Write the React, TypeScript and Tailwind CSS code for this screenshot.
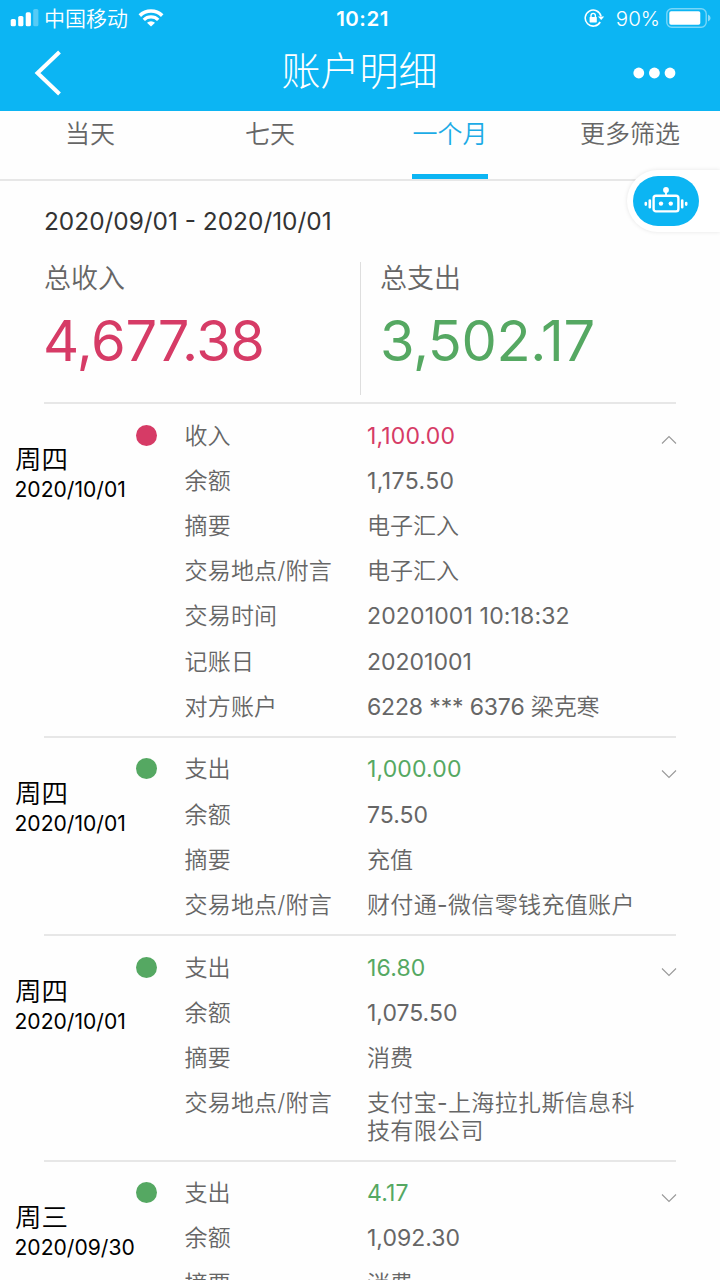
import clsx from "clsx";

type Row = { label: string; value: string; tracking?: string };

type Transaction = {
  day: string;
  date: string;
  type: "income" | "expense";
  amount: string;
  expanded?: boolean;
  rows: Row[];
};

const TABS = ["当天", "七天", "一个月", "更多筛选"];

const TRANSACTIONS: Transaction[] = [
  {
    day: "周四",
    date: "2020/10/01",
    type: "income",
    amount: "1,100.00",
    expanded: true,
    rows: [
      { label: "余额", value: "1,175.50", tracking: "tracking-[0.4px]" },
      { label: "摘要", value: "电子汇入" },
      { label: "交易地点/附言", value: "电子汇入" },
      { label: "交易时间", value: "20201001 10:18:32", tracking: "tracking-[0.15px]" },
      { label: "记账日", value: "20201001" },
      { label: "对方账户", value: "6228 *** 6376 梁克寒", tracking: "tracking-[-0.15px]" },
    ],
  },
  {
    day: "周四",
    date: "2020/10/01",
    type: "expense",
    amount: "1,000.00",
    rows: [
      { label: "余额", value: "75.50" },
      { label: "摘要", value: "充值" },
      { label: "交易地点/附言", value: "财付通-微信零钱充值账户", tracking: "tracking-[0.35px]" },
    ],
  },
  {
    day: "周四",
    date: "2020/10/01",
    type: "expense",
    amount: "16.80",
    rows: [
      { label: "余额", value: "1,075.50" },
      { label: "摘要", value: "消费" },
      { label: "交易地点/附言", value: "支付宝-上海拉扎斯信息科技有限公司", tracking: "tracking-[0.35px]" },
    ],
  },
  {
    day: "周三",
    date: "2020/09/30",
    type: "expense",
    amount: "4.17",
    rows: [
      { label: "余额", value: "1,092.30" },
      { label: "摘要", value: "消费" },
    ],
  },
];

// Digits need a regular weight to sit evenly beside the lighter Chinese glyphs.
function MixedText({ text }: { text: string }) {
  return text.split(/([\x20-\x7e]+)/).map((part, i) =>
    i % 2 ? (
      <span key={i} className="font-normal">
        {part}
      </span>
    ) : (
      part
    ),
  );
}

function StatusBar() {
  return (
    <div className="flex h-9 items-center justify-between pl-[10px] pr-[9px]">
      <div className="flex flex-1 items-center">
        <svg width="29" height="18" viewBox="0 0 29 18" fill="#fff">
          <rect x="0.7" y="10" width="5.2" height="7.3" rx="1.6" />
          <rect x="8.2" y="7" width="5.2" height="10.3" rx="1.6" />
          <rect x="15.7" y="3.3" width="5.2" height="14" rx="1.6" />
          <rect x="23.2" y="0" width="5.2" height="17.3" rx="1.6" opacity="0.3" />
        </svg>
        <span className="ml-[5px] pt-[1px] text-[21px] leading-9">中国移动</span>
        <svg className="ml-[10px]" width="26" height="18" viewBox="0 0 26 18" fill="none" stroke="#fff">
          <path d="M1.8 6.6 A16 16 0 0 1 24.2 6.6" strokeWidth="3.6" />
          <path d="M5.8 10.8 A10.2 10.2 0 0 1 20.2 10.8" strokeWidth="3.3" />
          <path d="M13 17.6 L9 13.8 A5.8 5.8 0 0 1 17 13.8 Z" fill="#fff" stroke="none" />
        </svg>
      </div>
      <span className="pl-1 pt-[1px] text-[20.5px] font-semibold leading-9 tracking-[0.5px]">10:21</span>
      <div className="flex flex-1 items-center justify-end">
        <svg width="21" height="19" viewBox="0 0 21 19" fill="none" stroke="#fff">
          <path d="M16.2 13 A8 8 0 1 1 17 7.2" strokeWidth="1.6" />
          <path d="M14 7.4 L20.2 7.4 L17.2 11 Z" fill="#fff" stroke="none" />
          <rect x="5.6" y="8" width="7.2" height="5.4" rx="0.6" fill="#fff" stroke="none" />
          <path d="M7 8.5 V6.6 A2.2 2.2 0 0 1 11.4 6.6 V8.5" strokeWidth="1.4" />
        </svg>
        <span className="ml-[11px] pt-[1px] text-[20.5px] leading-9">90%</span>
        <svg className="ml-[6px]" width="45" height="20" viewBox="0 0 45 20" fill="none">
          <rect x="0.8" y="0.8" width="39.4" height="18.4" rx="5" stroke="#fff" strokeOpacity="0.45" strokeWidth="1.4" />
          <rect x="3.3" y="3.3" width="31" height="13.4" rx="1.8" fill="#fff" />
          <path d="M42 6.5 Q44.6 7.5 44.6 10 Q44.6 12.5 42 13.5 Z" fill="#fff" fillOpacity="0.5" />
        </svg>
      </div>
    </div>
  );
}

function TitleBar() {
  return (
    <div className="flex h-[75px] items-center justify-between pb-[2px] pl-[34px] pr-[44px]">
      <svg width="28" height="46" viewBox="0 0 28 46" fill="none" stroke="#fff" strokeWidth="4">
        <path d="M25.5 2 L3.5 23 L25.5 44" />
      </svg>
      <h1 className="pb-[3px] pl-[24px] text-[39px] font-light leading-[56px]">账户明细</h1>
      <svg width="43" height="12" viewBox="0 0 43 12" fill="#fff">
        <circle cx="5.8" cy="6" r="5.4" />
        <circle cx="21.4" cy="6" r="5.4" />
        <circle cx="37" cy="6" r="5.4" />
      </svg>
    </div>
  );
}

function Tabs() {
  return (
    <nav className="grid h-[70px] grid-cols-4 border-b-2 border-[#e7e7e7]">
      {TABS.map((tab) => {
        const active = tab === "一个月";
        return (
          <div key={tab} className="flex justify-center">
            <button
              className={clsx(
                "flex h-[68px] items-start whitespace-nowrap border-b-[5px] px-[0.5px] pt-[5px] text-[25px] leading-[36px]",
                active ? "border-[#0cb5f3] text-[#1cabe6]" : "border-transparent text-[#666]",
              )}
            >
              {tab}
            </button>
          </div>
        );
      })}
    </nav>
  );
}

function AssistantButton() {
  return (
    <div className="absolute right-0 top-[170px] h-[62px] w-[93px] rounded-l-full bg-white pl-[6px] pt-[6px] shadow-[0_0_4px_rgba(0,0,0,0.1)]">
      <div className="flex h-[50px] w-[66px] items-center justify-center rounded-[25px] bg-[#0cb5f3]">
        <svg width="44" height="28" viewBox="0 0 44 28" fill="none" stroke="#fff">
          <circle cx="22" cy="3" r="2.9" fill="#fff" stroke="none" />
          <path d="M22 4 V9" strokeWidth="1.8" />
          <rect x="9.6" y="8.8" width="24.8" height="15.6" rx="2.4" strokeWidth="2.4" />
          <circle cx="17" cy="16.6" r="2.2" fill="#fff" stroke="none" />
          <circle cx="26.8" cy="16.6" r="2.2" fill="#fff" stroke="none" />
          <path d="M5.8 13.6 V20.2 M38.2 13.6 V20.2" strokeWidth="2.6" strokeLinecap="round" />
          <path d="M1.8 16 V17.6 M42.2 16 V17.6" strokeWidth="2.6" strokeLinecap="round" />
        </svg>
      </div>
    </div>
  );
}

function Summary() {
  return (
    <section className="mx-[44px] border-b-2 border-[#e7e7e7] pb-[7px]">
      <p className="pt-[22px] text-[24.4px] font-normal leading-[36px] text-[#333]">2020/09/01 - 2020/10/01</p>
      <div className="mt-[23px] grid h-[133px] grid-cols-2">
        <div className="-mr-px border-r border-[#dedede]">
          <p className="text-[27px] leading-[34px] text-[#666]">总收入</p>
          <p className="-ml-px mt-[12px] text-[56px] font-normal leading-[66px] tracking-[-0.45px] text-[#d63b66]">4,677.38</p>
        </div>
        <div className="pl-[20px]">
          <p className="text-[27px] leading-[34px] text-[#666]">总支出</p>
          <p className="mt-[12px] text-[56px] font-normal leading-[66px] tracking-[-0.4px] text-[#55a862]">3,502.17</p>
        </div>
      </div>
    </section>
  );
}

function Chevron({ up }: { up?: boolean }) {
  return (
    <svg width="16" height="10" viewBox="0 0 16 10" fill="none" stroke="#999" strokeWidth="1.1">
      <path d={up ? "M1 8.5 L8 1.5 L15 8.5" : "M1 1.5 L8 8.5 L15 1.5"} />
    </svg>
  );
}

function TransactionItem({ item }: { item: Transaction }) {
  const income = item.type === "income";
  return (
    <div className="flex pl-[15px]">
      <div className="w-[120.5px] shrink-0 pt-[36px] text-black">
        <p className="text-[26.5px] leading-[38px]">{item.day}</p>
        <p className="-ml-[0.5px] text-[21.1px] font-normal leading-[24px]">{item.date}</p>
      </div>
      <div className={clsx("mt-[20.5px] size-[21px] shrink-0 rounded-full", income ? "bg-[#d63b66]" : "bg-[#55a862]")} />
      <dl className="ml-[28px] w-[470px] shrink-0 pb-[6px] pt-[9.5px] text-[23px] leading-[27.2px] text-[#666]">
        <div className="flex py-[9px]">
          <dt className="w-[182.5px] shrink-0">{income ? "收入" : "支出"}</dt>
          <dd className={clsx("font-normal tracking-[0.15px]", income ? "text-[#d63b66]" : "text-[#55a862]")}>
            {item.amount}
          </dd>
        </div>
        {item.rows.map((row) => (
          <div key={row.label} className="flex py-[9px]">
            <dt className="w-[182.5px] shrink-0 tracking-[0.2px]">{row.label}</dt>
            <dd className={clsx("w-[280px] shrink-0", row.tracking)}>
              <MixedText text={row.value} />
            </dd>
          </div>
        ))}
      </dl>
      <div className="ml-[6.5px] shrink-0 pt-[31px]">
        <Chevron up={item.expanded} />
      </div>
    </div>
  );
}

export default function App() {
  return (
    <div className="relative h-[1280px] w-[720px] overflow-hidden bg-[#fefefe] font-['Inter','Noto_Sans_CJK_SC',sans-serif] font-[350]">
      <header className="bg-[#0cb5f3] text-white">
        <StatusBar />
        <TitleBar />
      </header>
      <Tabs />
      <Summary />
      <ul>
        {TRANSACTIONS.map((item, i) => (
          <li key={i}>
            {i > 0 && <hr className="mx-[44px] border-t-2 border-[#e7e7e7]" />}
            <TransactionItem item={item} />
          </li>
        ))}
      </ul>
      <AssistantButton />
    </div>
  );
}
